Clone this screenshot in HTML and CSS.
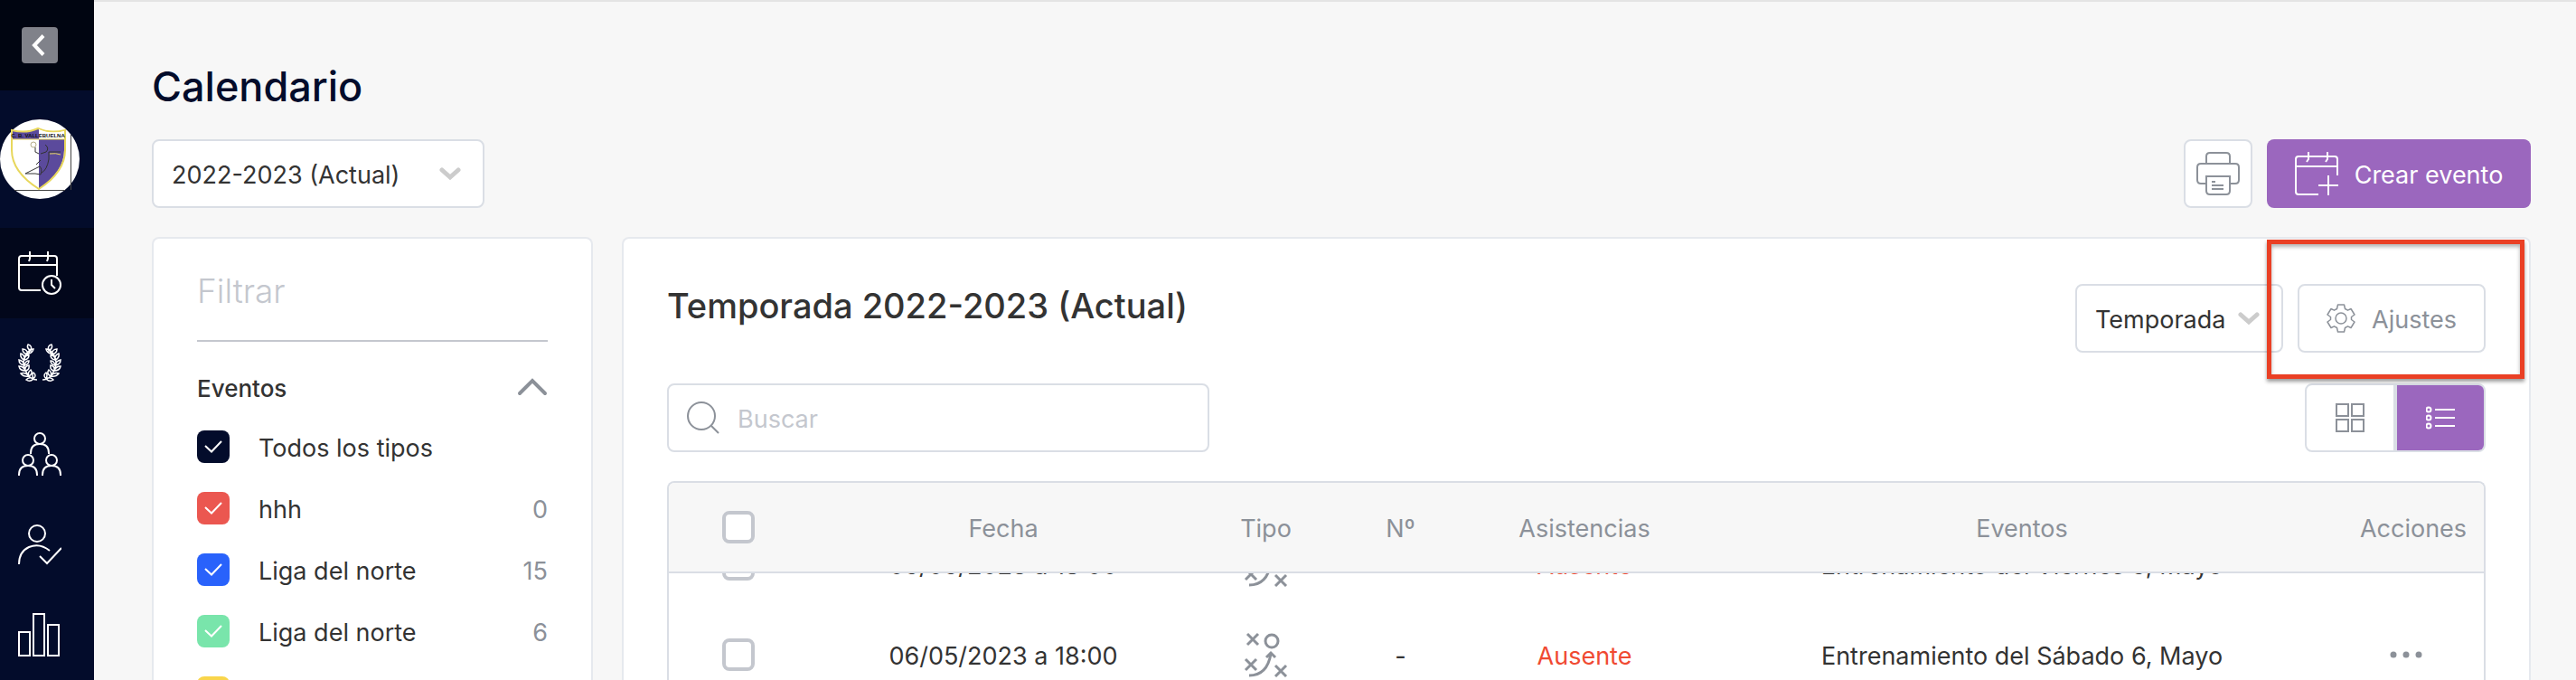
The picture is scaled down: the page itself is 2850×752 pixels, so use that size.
FILE: index.html
```html
<!DOCTYPE html>
<html lang="es">
<head>
    <meta charset="utf-8">
    <title>Calendario</title>
    <link rel="stylesheet" href="styles.css">
</head>
<body>

<nav class="sidebar">
    <div class="sidebar-top">
        <button class="btn-collapse" aria-label="Contraer menú">
            <svg width="40" height="40" viewBox="0 0 40 40"><path d="M24 9.500L14 20l10 10.500"/></svg>
        </button>
    </div>
    <a class="club" href="#" aria-label="Club">
        <svg width="88" height="88" viewBox="0 0 88 88">
            <circle cx="44" cy="44" r="44" fill="#fff" stroke="none"/>
            <path d="M78.500 17v61M16 78.500h56" stroke="#444" fill="none"/>
            <path d="M43 10v67q28-19 28-43V22H43zM13 12q16 4 30-2v12H13z" fill="#5b4a9c" stroke="none"/>
            <path d="M13 12q16 4 29-2 13 6 30 2v22q0 24-29 43Q13 58 13 34z" stroke="#e8d75c" stroke-width="2" fill="none"/>
            <path d="M43 11q13 6 28 2v9H43z" fill="#fff" stroke="none"/>
            <path d="M13 22h58" stroke="#e8d75c"/>
            <circle cx="37" cy="28" r="3" stroke="#b5ae8a" fill="none"/>
            <path d="M39 31v5l4 2M50 28q5 4 1 8l-6 2M54 36h13M54 36v8q-2 12-8 15M28 60l16-8q3 3 1 9l-6-1zM40 50l5-5" stroke="#333" fill="none"/>
            <path d="M55 38q7-1 12 1" stroke="#e8d75c" fill="none"/>
            <text x="42" y="20" text-anchor="middle" class="club-name">C. B. VALLEBUELNA</text>
        </svg>
    </a>
    <a class="nav-item active" href="#" aria-label="Calendario">
        <svg width="48" height="48" viewBox="0 0 48 48">
            <path d="M25 43H4q-3 0-3-3V8q0-3 3-3h36q3 0 3 3v19M1 15h42M13 0v8l-1 3M33 0v8l-1 3"/>
            <circle cx="37" cy="37" r="10"/>
            <path d="M37 31v6l4 4"/>
        </svg>
    </a>
    <a class="nav-item" href="#" aria-label="Competiciones">
        <svg width="48" height="48" viewBox="0 0 48 48" class="thin">
            <g id="branch">
                <path d="M14 8Q-1 21 12 38q4 4 9 4M14 10q-5-3-3-7 5 1 3 7zM11 14q-6-1-6-6 5 0 6 6zM12 13q0-5 5-5-1 4-5 5zM7 20q-5-2-4-7 5 2 4 7zM7 20q0-5 5-5 0 4-5 5zM7 26q-6-1-6-6 5 1 6 6zM7 26q1-5 5-5 0 4-5 5zM8 32q-6 0-7-5 5 0 7 5zM8 32q-1-5 4-6 1 5-4 6zM12 38q-6 1-9-3 5-2 9 3zM12 38q-2-4 2-7 3 4-2 7zM17 41q-4 4-8 1 3-4 8-1zM17 41q-2-5 0-7 4 3 0 7z"/>
            </g>
            <use href="#branch" transform="matrix(-1 0 0 1 48 0)"/>
        </svg>
    </a>
    <a class="nav-item" href="#" aria-label="Equipos">
        <svg width="48" height="48" viewBox="0 0 48 48">
            <circle cx="24" cy="7" r="6"/><path d="M14 24V23q0-10 10-10t10 10v1"/>
            <circle cx="11" cy="31" r="6"/><path d="M1 48v-1q0-10 10-10t10 10v1"/>
            <circle cx="37" cy="31" r="6"/><path d="M27 48v-1q0-10 10-10t10 10v1"/>
        </svg>
    </a>
    <a class="nav-item" href="#" aria-label="Asistencia">
        <svg width="48" height="48" viewBox="0 0 48 48">
            <circle cx="21" cy="12" r="9"/>
            <path d="M1 46q0-14 11-19 12-5 23 4M24 37l8 8 16-17"/>
        </svg>
    </a>
    <a class="nav-item" href="#" aria-label="Estadísticas">
        <svg width="48" height="48" viewBox="0 0 48 48">
            <path d="M1 21h12v26H1zM17 1h12v46H17zM33 13h12v34H33z"/>
        </svg>
    </a>
</nav>

<main class="page">
    <h1>Calendario</h1>

    <div class="toolbar">
        <div class="select season">
            <select aria-label="Temporada actual"><option>2022-2023 (Actual)</option></select>
            <svg width="24" height="16" viewBox="0 0 24 16"><path d="M3 4l9 8 9-8"/></svg>
        </div>
        <div class="actions">
            <button class="btn btn-print" aria-label="Imprimir">
                <svg width="48" height="48" viewBox="0 0 48 48">
                    <path d="M11 13V5q0-4 4-4h18q4 0 4 4v8M11 35H5q-4 0-4-4V17q0-4 4-4h38q4 0 4 4v14q0 4-4 4h-6M11 27h26v16q0 4-4 4H15q-4 0-4-4zM17 33h4M17 37h13M17 41h13"/>
                </svg>
            </button>
            <button class="btn btn-create">
                <svg width="48" height="48" viewBox="0 0 48 48">
                    <path d="M26 47H4q-3 0-3-3V8q0-3 3-3h40q3 0 3 3v18M1 16h46M15 0v8l-2 3M36 0v8l-2 3M37 26v22M26 37h22"/>
                </svg>
                <span>Crear evento</span>
            </button>
        </div>
    </div>

    <div class="content">
        <aside class="card filter">
            <h2>Filtrar</h2>
            <div class="filter-head">
                <h3>Eventos</h3>
                <button class="btn-fold" aria-label="Plegar">
                    <svg width="34" height="20" viewBox="0 0 34 20"><path d="M3 17L17 3l14 14"/></svg>
                </button>
            </div>
            <label class="type"><input type="checkbox" class="check navy" checked><span>Todos los tipos</span></label>
            <label class="type"><input type="checkbox" class="check red" checked><span>hhh</span><span class="count">0</span></label>
            <label class="type"><input type="checkbox" class="check blue" checked><span>Liga del norte</span><span class="count">15</span></label>
            <label class="type"><input type="checkbox" class="check green" checked><span>Liga del norte</span><span class="count">6</span></label>
            <label class="type"><input type="checkbox" class="check yellow" checked></label>
        </aside>

        <section class="card events">
            <div class="events-head">
                <h2>Temporada 2022-2023 (Actual)</h2>
                <div class="select period">
                    <select aria-label="Periodo"><option>Temporada</option></select>
                    <svg width="24" height="16" viewBox="0 0 24 16"><path d="M3 4l9 8 9-8"/></svg>
                </div>
                <div class="settings">
                    <button class="btn btn-settings">
                        <svg width="32" height="32" viewBox="0 0 32 32">
                            <path d="M12.500 1h7l1 4.500 3 1.700 3.500-1.700 4 6.500-3.500 2.500v3L31 20l-4 6.500-3.500-1.700-3 1.700-1 4.500h-7l-1-4.500-3-1.700L5 26.500 1 20l3.500-2.500v-3L1 12l4-6.500 3.500 1.700 3-1.700z"/>
                            <circle cx="16" cy="16" r="6"/>
                        </svg>
                        <span>Ajustes</span>
                    </button>
                    <div class="highlight"></div>
                </div>
            </div>

            <div class="events-tools">
                <div class="search">
                    <svg width="36" height="36" viewBox="0 0 36 36"><circle cx="16" cy="16" r="15"/><path d="M27 27l8 8"/></svg>
                    <input type="text" placeholder="Buscar" aria-label="Buscar">
                </div>
                <div class="view">
                    <button aria-label="Cuadrícula">
                        <svg width="32" height="32" viewBox="0 0 32 32"><path d="M1 1h13v13H1zM18 1h13v13H18zM1 18h13v13H1zM18 18h13v13H18z"/></svg>
                    </button>
                    <button class="on" aria-label="Lista">
                        <svg width="32" height="26" viewBox="0 0 32 26"><circle cx="3" cy="4" r="2.500"/><circle cx="3" cy="13" r="2.500"/><circle cx="3" cy="22" r="2.500"/><path d="M10 4h22M10 13h22M10 22h22"/></svg>
                    </button>
                </div>
            </div>

            <div class="table-wrap">
                <table>
                    <thead>
                        <tr>
                            <th class="c-check"><input type="checkbox" class="check" aria-label="Seleccionar todo"></th>
                            <th class="c-date">Fecha</th>
                            <th class="c-type">Tipo</th>
                            <th class="c-num">Nº</th>
                            <th class="c-att">Asistencias</th>
                            <th>Eventos</th>
                            <th class="c-act">Acciones</th>
                        </tr>
                    </thead>
                    <tbody>
                        <tr>
                            <td class="icon"><input type="checkbox" class="check" aria-label="Seleccionar"></td>
                            <td>05/05/2023 a 18:00</td>
                            <td class="icon">
                                <svg class="play" width="50" height="50" viewBox="0 0 50 50"><path id="play" d="M4 2l12 12M16 2L4 14M2 30l12 12M14 30L2 42M35 37l12 12M47 37L35 49M6 48q20 0 24-24M25 28l5-5 5 5"/><circle cx="31" cy="10" r="7"/></svg>
                            </td>
                            <td>-</td>
                            <td class="absent">Ausente</td>
                            <td>Entrenamiento del Viernes 5, Mayo</td>
                            <td class="icon"><button class="btn-dots" aria-label="Más acciones"><svg width="36" height="8" viewBox="0 0 36 8"><circle cx="4" cy="4" r="3.500"/><circle cx="18" cy="4" r="3.500"/><circle cx="32" cy="4" r="3.500"/></svg></button></td>
                        </tr>
                        <tr>
                            <td class="icon"><input type="checkbox" class="check" aria-label="Seleccionar"></td>
                            <td>06/05/2023 a 18:00</td>
                            <td class="icon">
                                <svg class="play" width="50" height="50" viewBox="0 0 50 50"><use href="#play"/><circle cx="31" cy="10" r="7"/></svg>
                            </td>
                            <td>-</td>
                            <td class="absent">Ausente</td>
                            <td>Entrenamiento del Sábado 6, Mayo</td>
                            <td class="icon"><button class="btn-dots" aria-label="Más acciones"><svg width="36" height="8" viewBox="0 0 36 8"><circle cx="4" cy="4" r="3.500"/><circle cx="18" cy="4" r="3.500"/><circle cx="32" cy="4" r="3.500"/></svg></button></td>
                        </tr>
                    </tbody>
                </table>
            </div>
        </section>
    </div>
</main>

<script type="text/javascript">
    document.querySelector('.table-wrap').scrollTop = 60
</script>

</body>
</html>
```

FILE: styles.css
```css
* {
    box-sizing: border-box;
}
body {
    display: flex;
    height: 100vh;
    margin: 0;
    overflow: hidden;
    background: #f7f7f7;
    color: #333;
    font: 27px/36px Inter, "Liberation Sans", sans-serif;
}
button, input, select {
    font: inherit;
    color: inherit;
}
button {
    padding: 0;
    border: 0;
    background: none;
    cursor: pointer;
}
svg {
    flex: none;
    fill: none;
    stroke: currentColor;
    stroke-width: 2;
}
h1, h2, h3 {
    margin: 0;
    font-weight: 500;
}

/* sidebar */
.sidebar {
    flex: none;
    width: 104px;
    background: #030c2b;
    color: white;
}
.sidebar-top {
    height: 100px;
    padding: 30px 24px;
    background: #000511;
}
.btn-collapse {
    display: block;
    width: 40px;
    height: 40px;
    border-radius: 4px;
    background: #80828a;
}
.btn-collapse svg {
    display: block;
    stroke-width: 4;
}
.club {
    display: flex;
    align-items: center;
    height: 152px;
    color: white;
}
.club svg {
    stroke-width: 1;
}
.club-name {
    font: bold 6px "Liberation Sans", sans-serif;
    fill: #111;
    stroke: none;
}
.nav-item {
    display: flex;
    align-items: center;
    height: 100px;
    padding-left: 20px;
    color: white;
}
.nav-item.active {
    background: #02071b;
}
.thin {
    stroke-width: 1.5;
}

/* page */
.page {
    display: flex;
    flex: 1;
    flex-direction: column;
    min-width: 0;
    padding: 60px 50px 0 64px;
    border-top: 2px solid #e4e4e4;
}
h1 {
    color: #030c2b;
    font-size: 45px;
    line-height: 68px;
}
.toolbar {
    display: flex;
    justify-content: space-between;
    margin: 24px 0 32px;
}
.actions {
    display: flex;
    gap: 16px;
}
.btn, .select, .search, .view {
    height: 76px;
    border: 2px solid #dadee5;
    border-radius: 8px;
    background: white;
}
.btn {
    display: flex;
    align-items: center;
    justify-content: center;
    gap: 18px;
    color: #8c9199;
}
.btn span, .type span {
    padding-top: 4px;
}
.btn-print {
    width: 76px;
}
.btn-create {
    width: 292px;
    border: 0;
    background: #9b67be;
    color: white;
}
.select {
    display: flex;
    align-items: center;
    justify-content: space-between;
    padding: 0 24px 0 20px;
}
.select select {
    flex: 1;
    min-width: 0;
    height: 100%;
    padding: 4px 0 0;
    border: 0;
    outline: 0;
    background: none;
    appearance: none;
}
.select svg {
    stroke: #ccc;
    stroke-linecap: round;
    stroke-width: 5;
}
.season {
    width: 368px;
}
.content {
    display: flex;
    flex: 1;
    gap: 32px;
    min-height: 0;
}
.card {
    border: 2px solid #e6e9ee;
    border-bottom: 0;
    border-radius: 8px 8px 0 0;
    background: white;
}

/* filter */
.filter {
    flex: none;
    width: 488px;
    padding: 32px 48px 0;
    overflow: hidden;
}
.filter h2 {
    padding-bottom: 28px;
    border-bottom: 2px solid #c4c7ce;
    color: #c4c7ce;
    font-size: 37px;
    font-weight: 300;
    line-height: 52px;
}
.filter-head {
    display: flex;
    align-items: center;
    justify-content: space-between;
    height: 82px;
    padding-top: 18px;
    margin-bottom: 16px;
}
.filter h3 {
    padding-top: 4px;
    font-size: 26px;
}
.btn-fold {
    color: #8c9199;
}
.btn-fold svg {
    display: block;
    stroke-linecap: round;
    stroke-width: 4;
}
.type {
    display: flex;
    align-items: center;
    height: 36px;
    margin-bottom: 32px;
    gap: 32px;
}
.count {
    margin-left: auto;
    color: #8c9199;
}
.check {
    display: block;
    flex: none;
    width: 36px;
    height: 36px;
    margin: 0;
    border: 4px solid #c4c7ce;
    border-radius: 8px;
    background: white;
    appearance: none;
}
.check:checked {
    border: 0;
    background: url("data:image/svg+xml,%3Csvg xmlns='http://www.w3.org/2000/svg' width='36' height='36'%3E%3Cpath d='M9 17l7 6.500L27 12' fill='none' stroke='white' stroke-width='2'/%3E%3C/svg%3E");
}
.navy {
    background-color: #030c2b !important;
}
.red {
    background-color: #eb5750 !important;
}
.blue {
    background-color: #2962fb !important;
}
.green {
    background-color: #79e5ab !important;
}
.yellow {
    background-color: #f9d54b !important;
}

/* events */
.events {
    display: flex;
    flex: 1;
    flex-direction: column;
    min-width: 0;
    padding: 50px 48px 0;
}
.events-head {
    display: flex;
    gap: 16px;
    margin-bottom: 34px;
}
.events-head h2 {
    flex: 1;
    font-size: 38px;
    line-height: 48px;
}
.period {
    width: 230px;
}
.settings {
    position: relative;
}
.btn-settings {
    width: 208px;
}
.btn-settings svg {
    stroke-width: 1.5;
    stroke-linejoin: round;
}
/* frame drawn over the settings button */
.highlight {
    position: absolute;
    top: -49px;
    right: -43px;
    bottom: -29px;
    left: -34px;
    border: 5px solid #ea4025;
    box-shadow: 0 3px 4px rgba(0, 0, 0, .4), inset 0 3px 4px rgba(0, 0, 0, .3);
    pointer-events: none;
}
.events-tools {
    display: flex;
    justify-content: space-between;
    margin-bottom: 32px;
}
.search {
    display: flex;
    align-items: center;
    width: 600px;
    padding: 0 20px;
    gap: 20px;
    color: #8c9199;
}
.search input {
    flex: 1;
    min-width: 0;
    padding: 4px 0 0;
    border: 0;
    outline: 0;
}
.search input::placeholder {
    color: #c4c7ce;
    opacity: 1;
}
.view {
    display: flex;
    width: 200px;
    overflow: hidden;
}
.view button {
    display: flex;
    flex: 1;
    align-items: center;
    justify-content: center;
    color: #8c9199;
}
.view .on {
    border-left: 4px solid #dadee5;
    background: #9b67be;
    color: white;
}
.table-wrap {
    flex: 1;
    min-height: 0;
    overflow: auto;
    scrollbar-width: none;
    border: 2px solid #dadee5;
    border-bottom: 0;
    border-radius: 8px 8px 0 0;
}
table {
    width: 100%;
    table-layout: fixed;
    border-spacing: 0;
    text-align: center;
}
thead {
    position: sticky;
    top: 0;
    z-index: 1;
}
th, td {
    height: 100px;
    padding: 4px 0 0;
}
th {
    border-bottom: 2px solid #dadee5;
    background: #f7f7f7;
    color: #8c9199;
    font-weight: 400;
}
.icon, .c-check {
    padding: 0;
}
table .check {
    margin: 0 auto;
}
.c-check {
    width: 154px;
}
.c-date {
    width: 432px;
}
.c-type, .c-num {
    width: 149px;
}
.c-att {
    width: 258px;
}
.c-act {
    width: 156px;
}
.play {
    display: block;
    margin: 0 auto;
    color: #8c9199;
    stroke-width: 3;
}
.absent {
    color: #f04a32;
}
.btn-dots {
    display: block;
    margin-left: 52px;
}
.btn-dots svg {
    display: block;
    fill: #8c9199;
    stroke: none;
}
```
